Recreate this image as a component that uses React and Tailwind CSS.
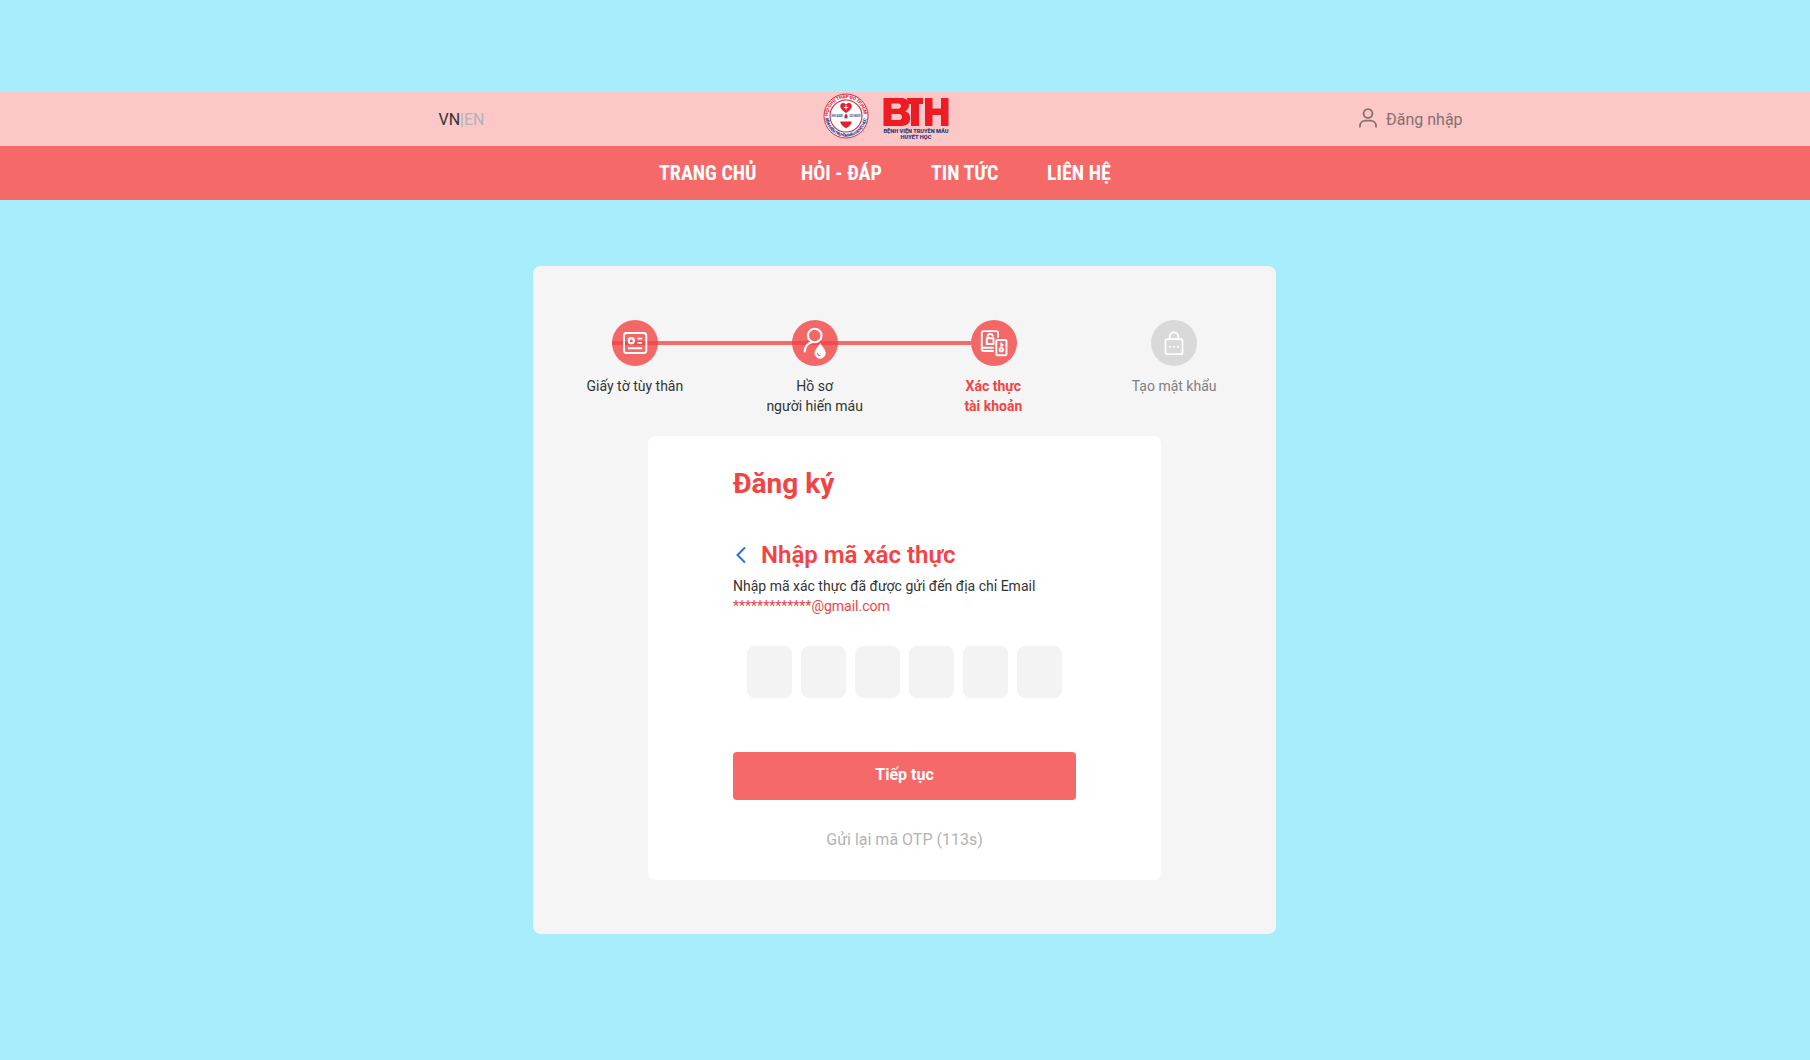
import React from 'react';

const NAV = [
  { label: 'TRANG CHỦ', cls: 'w-[97px] mr-[45px]' },
  { label: 'HỎI - ĐÁP', cls: 'w-[80px] mr-[50px]' },
  { label: 'TIN TỨC', cls: 'w-[67px] mr-[49px]' },
  { label: 'LIÊN HỆ', cls: 'w-[64px]' },
];

function Seal() {
  return (
    <svg viewBox="0 0 46 46" className="h-[46px] w-[46px]" fontFamily="Roboto, sans-serif">
      <defs>
        <path id="sealTop" d="M5.200 23a17.800 17.800 0 0 1 35.600 0" />
        <path id="sealBottom" d="M2.400 25a20.700 20.700 0 0 0 41.200 0" />
      </defs>
      <circle cx="23" cy="23" r="22" fill="#fff" stroke="#e0283a" strokeWidth="1" />
      <circle cx="23" cy="23" r="16" fill="none" stroke="#d9233a" strokeWidth="1.100" />
      <text fontSize="4.800" fontWeight="900" fill="#e0283a">
        <textPath href="#sealTop" textLength="54">HỘI CHỮ THẬP ĐỎ TP.HCM</textPath>
      </text>
      <text fontSize="4.200" fontWeight="900" fill="#2d3f8a">
        <textPath href="#sealBottom" textLength="60">BỆNH VIỆN TRUYỀN MÁU HUYẾT HỌC</textPath>
      </text>
      <path d="M23 20c-3.600-2.600-5.800-4.600-5.800-7a3.100 3.100 0 0 1 5.800-1.500 3.100 3.100 0 0 1 5.800 1.500c0 2.400-2.200 4.400-5.800 7Z" fill="#e3202e" />
      <path d="M23 12.100v4.600M20.700 14.400h4.600" stroke="#fff" strokeWidth="1" />
      <path d="M23 20.500c1 1.500 1.700 2.500 1.700 3.400a1.700 1.700 0 0 1-3.400 0c0-.9.7-1.900 1.700-3.400Z" fill="#e3202e" />
      <path d="M17.200 28.500h11.600c-.3 3-2.500 4.700-5.800 6.700-3.300-2-5.500-3.700-5.800-6.700Z" fill="#e3202e" />
      <text x="8.500" y="24.400" fontSize="3.400" fontWeight="800" fill="#2d3f8a" textLength="11" lengthAdjust="spacingAndGlyphs">HIV/AIDS</text>
      <text x="26.500" y="24.400" fontSize="3.400" fontWeight="800" fill="#2d3f8a" textLength="11" lengthAdjust="spacingAndGlyphs">CỨU NGƯỜI</text>
    </svg>
  );
}

function Wordmark() {
  return (
    <svg viewBox="0 0 68 48" className="h-[48px] w-[68px]" fontFamily="Roboto, sans-serif" fontWeight="900">
      <g fill="#ed1c24">
        <path fillRule="evenodd" d="M1.500 5h17.500c5 0 8 2.500 8 7 0 3-1.300 5-3.700 6.200 3.200 1 4.900 3.400 4.900 6.800 0 5.200-3.500 8-9 8H1.500Zm8 5.500v5.200h6.500c4 0 4-5.200 0-5.200Zm0 10.500v6h7.500c4 0 4-6 0-6Z" />
        <path d="M25 5h16v6h-4v22h-8V11h-3.500Z" />
        <path d="M43 5h7.500v10.500H59V5h7.500v28H59V22h-8.500v11H43Z" />
      </g>
      <text x="1.500" y="40" fontSize="5.400" fill="#2b3a7c" textLength="65" lengthAdjust="spacingAndGlyphs">BỆNH VIỆN TRUYỀN MÁU</text>
      <text x="18.500" y="46.300" fontSize="5.400" fill="#2b3a7c" textLength="31" lengthAdjust="spacingAndGlyphs">HUYẾT HỌC</text>
    </svg>
  );
}

function IdCardIcon() {
  return (
    <svg viewBox="0 0 46 46" className="h-full w-full" fill="none" stroke="#fff" strokeWidth="1.900" strokeLinecap="round">
      <rect x="12" y="13" width="22.300" height="20" rx="2.500" />
      <circle cx="19.300" cy="20.700" r="2.600" strokeWidth="2.100" />
      <path d="M26.300 18.600h3M26.300 22.900h3M16.700 28.300h12.700" />
    </svg>
  );
}

function DonorIcon() {
  return (
    <svg viewBox="0 0 46 46" className="h-full w-full" fill="none" stroke="#fff" strokeWidth="2.100" strokeLinecap="round">
      <circle cx="22.700" cy="15.500" r="6.800" />
      <path d="M12.700 31.500c.3-4.800 3-8.200 7.500-9.200" />
      <path d="M28.300 24c2.700 3.300 5 6.300 5 9.100a5.200 5.200 0 0 1-10.400 0c0-2.800 2.700-5.800 5.400-9.100Z" fill="#fff" strokeWidth=".8" />
      <path d="M25.500 33.300c.3 1.300 1.200 2.100 2.600 2.200" stroke="#f46666" strokeWidth="1.200" />
    </svg>
  );
}

function VerifyIcon() {
  return (
    <svg viewBox="0 0 46 46" className="h-full w-full" fill="none" stroke="#fff" strokeWidth="1.900" strokeLinecap="round" strokeLinejoin="round">
      <path d="M27 17v-4.200c0-1-.7-1.700-1.700-1.700H12.800c-1.200 0-2 .8-2 2V29c0 1.300.8 2 2 2H22M11 27.700h11" />
      <path d="M15.800 18.300h6.700v5.700h-6.700ZM16.700 18v-1.500c0-3.300 4.600-3.300 5-.6" />
      <rect x="25.300" y="20" width="10.200" height="15.300" rx="1" />
      <circle cx="30.300" cy="29.700" r="1.700" />
      <path d="M30.300 28v-4.800M30.300 24.900h1.500" />
    </svg>
  );
}

function LockIcon() {
  return (
    <svg viewBox="0 0 46 46" className="h-full w-full" fill="none" stroke="#fff" strokeWidth="1.700" strokeLinecap="round">
      <rect x="14.500" y="19.200" width="17" height="15" rx="1.700" />
      <path d="M18.700 19v-2.300a4.200 4.200 0 0 1 8.500 0V19" />
      <path d="M19 26.700h.1M23 26.700h.1M27 26.700h.1" strokeWidth="2" />
    </svg>
  );
}

const STEPS = [
  { icon: IdCardIcon, lines: ['Giấy tờ tùy thân'], text: 'text-[#333]', dot: 'bg-[#f34343]/80' },
  { icon: DonorIcon, lines: ['Hồ sơ', 'người hiến máu'], text: 'text-[#333]', dot: 'bg-[#f34343]/80' },
  { icon: VerifyIcon, lines: ['Xác thực', 'tài khoản'], text: 'text-[#f34343] font-bold pr-[2px]', dot: 'bg-[#f34343]/80' },
  { icon: LockIcon, lines: ['Tạo mật khẩu'], text: 'text-[#808080]', dot: 'bg-[#d9d9d9]' },
];

function Stepper() {
  return (
    <div className="relative grid w-[719px] grid-cols-4 pt-[54px]">
      <div className="absolute left-[67px] top-[75px] h-1 w-[359px] bg-[#f56969]" />
      {STEPS.map(({ icon: Icon, lines, text, dot }) => (
        <div key={lines[0]} className="relative flex flex-col items-center">
          <div className={'h-[46px] w-[46px] rounded-full ' + dot}>
            <Icon />
          </div>
          <div className={'mt-[10px] text-center text-sm leading-5 ' + text}>
            {lines.map((l) => (
              <div key={l}>{l}</div>
            ))}
          </div>
        </div>
      ))}
    </div>
  );
}

export default function App() {
  return (
    <div className="h-[1060px] w-[1810px] overflow-hidden bg-[#a7edfc] pt-[92px] font-[Roboto,sans-serif]">
      <header className="flex h-[54px] items-center bg-[#fbc7c7] pl-[438.500px]">
        <div className="flex w-[384.500px] pt-[2px] text-base">
          <span className="text-[#333]">VN</span>
          <span className="text-[#b3b3b3]">|EN</span>
        </div>
        <div className="flex h-full items-start gap-[12.500px] pt-[.5px]">
          <Seal />
          <Wordmark />
        </div>
        <div className="ml-[408.500px] flex items-center gap-[8px] text-[#857070]">
          <svg viewBox="0 0 20 22" className="-mt-[3px] h-[22px] w-5" fill="none" stroke="currentColor" strokeWidth="1.800" strokeLinecap="round">
            <circle cx="10" cy="6.500" r="4.400" />
            <path d="M1.900 19.700c0-4 2.700-6 5.600-6h5c2.900 0 5.600 2 5.600 6" />
          </svg>
          <span className="pt-[2px]">Đăng nhập</span>
        </div>
      </header>

      <nav className="flex h-[54px] items-center bg-[#f56969] pl-[659px] text-[20px] font-bold text-white">
        {NAV.map((n) => (
          <a key={n.label} className={'flex-none whitespace-nowrap font-["Roboto_Condensed",Roboto,sans-serif] [font-stretch:75%] ' + n.cls}>
            {n.label}
          </a>
        ))}
      </nav>

      <main className="ml-[533px] mt-[66px] flex h-[668px] w-[743px] flex-col items-center rounded-lg bg-[#f5f5f5]">
        <Stepper />
        <section className="mt-[20px] h-[444px] w-[513px] flex-none rounded-lg bg-white px-[85px] pt-[32px]">
          <h1 className="text-[28px] font-bold leading-8 text-[#f34343]">Đăng ký</h1>
          <div className="mt-[40px] flex items-center">
            <svg viewBox="0 0 16 20" className="mr-[12px] h-5 w-4" fill="none" stroke="#2f6fde" strokeWidth="2">
              <path d="M12 2.500 4.500 10l7.500 7.500" />
            </svg>
            <h2 className="pt-px text-2xl font-semibold leading-7 text-[#f34343]">Nhập mã xác thực</h2>
          </div>
          <p className="mt-[7px] text-sm leading-5 text-[#333]">Nhập mã xác thực đã được gửi đến địa chỉ Email</p>
          <p className="text-sm leading-5 text-[#f34343]">*************@gmail.com</p>
          <div className="mt-[30px] flex justify-center gap-[9px]">
            {[0, 1, 2, 3, 4, 5].map((i) => (
              <div key={i} className="h-[52px] w-[45px] rounded-lg bg-[#f3f3f3]" />
            ))}
          </div>
          <button className="mt-[53.500px] h-[48px] w-full rounded bg-[#f56969] pb-px text-base font-bold text-white">Tiếp tục</button>
          <p className="mt-[28.500px] text-center text-base text-[#b3b3b3]">Gửi lại mã OTP (113s)</p>
        </section>
      </main>
    </div>
  );
}
